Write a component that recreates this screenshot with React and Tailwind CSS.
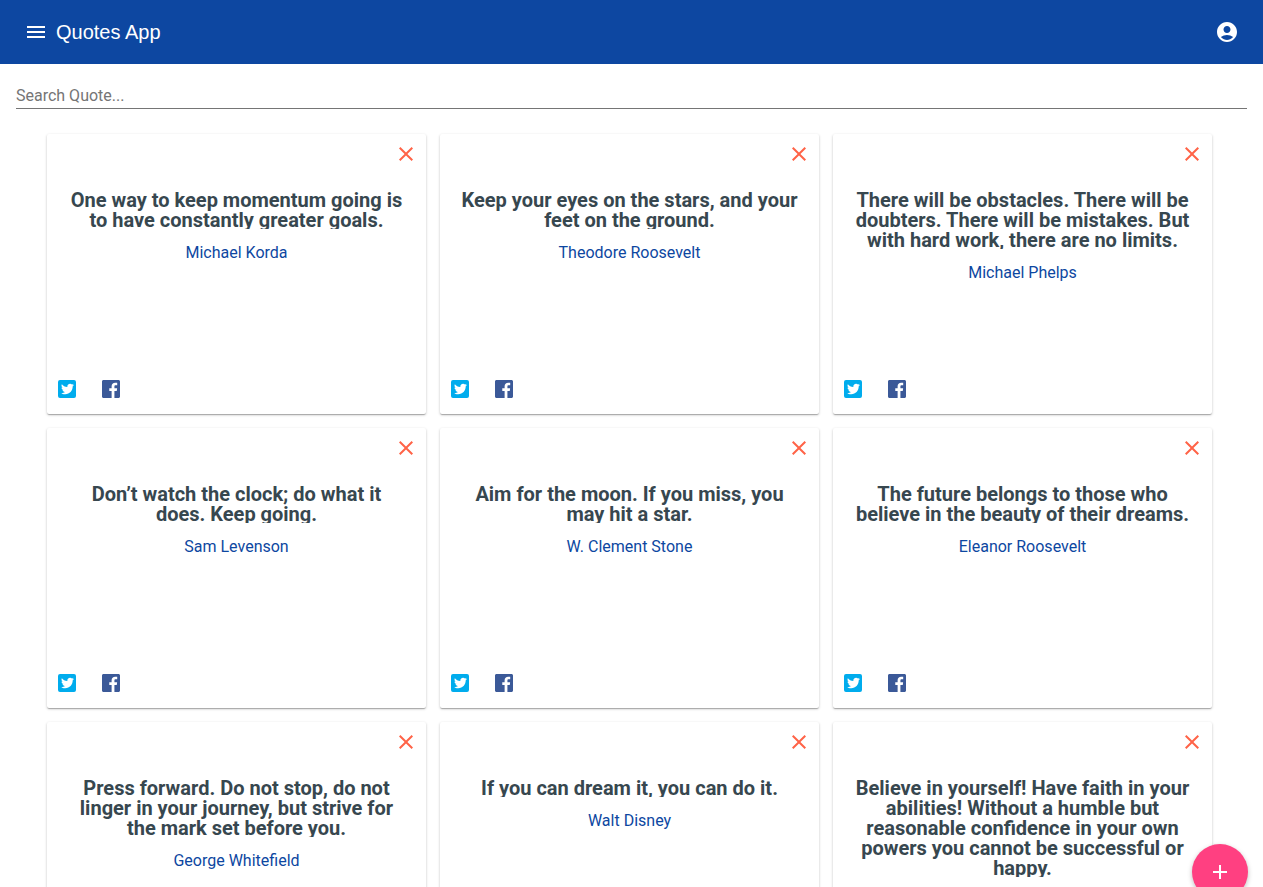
import { MdAccountCircle, MdAdd, MdClose, MdMenu } from "react-icons/md";

const quotes = [
  { text: "One way to keep momentum going is to have constantly greater goals.", author: "Michael Korda" },
  { text: "Keep your eyes on the stars, and your feet on the ground.", author: "Theodore Roosevelt" },
  { text: "There will be obstacles. There will be doubters. There will be mistakes. But with hard work, there are no limits.", author: "Michael Phelps" },
  { text: "Don’t watch the clock; do what it does. Keep going.", author: "Sam Levenson" },
  { text: "Aim for the moon. If you miss, you may hit a star.", author: "W. Clement Stone" },
  { text: "The future belongs to those who believe in the beauty of their dreams.", author: "Eleanor Roosevelt" },
  { text: "Press forward. Do not stop, do not linger in your journey, but strive for the mark set before you.", author: "George Whitefield" },
  { text: "If you can dream it, you can do it.", author: "Walt Disney" },
  { text: "Believe in yourself! Have faith in your abilities! Without a humble but reasonable confidence in your own powers you cannot be successful or happy.", author: "Norman Vincent Peale" },
];

function TwitterIcon() {
  return (
    <svg viewBox="0 0 24 24" className="size-6 fill-[#00aced]" aria-hidden="true">
      <path d="M5,3H19A2,2 0 0,1 21,5V19A2,2 0 0,1 19,21H5A2,2 0 0,1 3,19V5A2,2 0 0,1 5,3M17.71,9.33C18.19,8.93 18.75,8.45 19,7.92C18.59,8.13 18.1,8.26 17.56,8.33C18.06,7.97 18.47,7.5 18.68,6.86C18.16,7.14 17.63,7.38 16.97,7.5C15.42,5.63 11.71,7.15 12.37,9.95C9.76,9.79 8.17,8.61 6.85,7.16C6.1,8.38 6.75,10.23 7.64,10.74C7.18,10.71 6.83,10.57 6.5,10.41C6.54,11.95 7.39,12.69 8.58,13.09C8.22,13.16 7.82,13.18 7.44,13.12C7.81,14.19 8.58,14.86 9.9,15C9,15.76 7.34,16.29 6,16.08C7.15,16.81 8.46,17.39 10.28,17.31C14.69,17.11 17.64,13.95 17.71,9.33Z" />
    </svg>
  );
}

function FacebookIcon() {
  return (
    <svg viewBox="0 0 24 24" className="size-6 fill-[#3b5998]" aria-hidden="true">
      <path d="M19.5 3H4.5C3.67 3 3 3.67 3 4.5v15c0 .83.67 1.5 1.5 1.5h8.114v-6.971h-2.346v-2.717h2.346V9.31c0-2.325 1.42-3.591 3.494-3.591.993 0 1.847.074 2.096.107v2.43h-1.438c-1.128 0-1.346.536-1.346 1.323v1.734h2.69l-.35 2.717h-2.34V21H19.5c.83 0 1.5-.67 1.5-1.5V4.5C21 3.67 20.33 3 19.5 3z" />
    </svg>
  );
}

function QuoteCard({ text, author }) {
  return (
    <li className="flex min-h-[280px] flex-col rounded-xs bg-white pb-[5px] shadow-[0_1px_3px_0_rgba(0,0,0,0.2),0_1px_1px_0_rgba(0,0,0,0.14),0_2px_1px_-1px_rgba(0,0,0,0.12)]">
      <button type="button" aria-label="Delete quote" className="flex size-10 items-center justify-center self-end text-[#ff6347]">
        <MdClose className="size-6" />
      </button>
      <div className="flex-1 px-5 py-4 text-center">
        <h2 className="text-xl/5 font-bold text-[#37474f] [clip-path:inset(0_0_1px)]">{text}</h2>
        <p className="mt-[11px] text-base text-[#0d47a1]">{author}</p>
      </div>
      <div className="flex gap-1">
        <button type="button" aria-label="Share on Twitter" className="flex size-10 items-center justify-center">
          <TwitterIcon />
        </button>
        <button type="button" aria-label="Share on Facebook" className="flex size-10 items-center justify-center">
          <FacebookIcon />
        </button>
      </div>
    </li>
  );
}

export default function App() {
  return (
    <div className="min-h-screen bg-white font-['Roboto',sans-serif]">
      <header className="flex h-16 items-center bg-[#0d47a1] px-6 text-white">
        <button type="button" aria-label="Open menu">
          <MdMenu className="size-6" />
        </button>
        <h1 className="ml-2 flex-1 font-['Liberation_Sans',Arial,sans-serif] text-xl">Quotes App</h1>
        <button type="button" aria-label="Account">
          <MdAccountCircle className="size-6" />
        </button>
      </header>
      <main>
        <div className="px-4 pt-[18px]">
          <input
            type="text"
            aria-label="Search Quote"
            placeholder="Search Quote..."
            className="block h-[27px] w-full border-b border-[#757575] bg-transparent text-base text-[#212121] placeholder:text-[#757575] focus:outline-none"
          />
        </div>
        <ul className="mt-[25px] grid grid-cols-3 gap-3.5 pb-[7px] pl-[47px] pr-[51px]">
          {quotes.map((quote) => (
            <QuoteCard key={quote.author} {...quote} />
          ))}
        </ul>
      </main>
      <button
        type="button"
        aria-label="Add quote"
        className="fixed -bottom-[13px] right-[15px] flex size-14 items-center justify-center rounded-full bg-[#ff4081] text-white shadow-[0_2px_5px_0_rgba(0,0,0,0.26)]"
      >
        <MdAdd className="size-6" />
      </button>
    </div>
  );
}
